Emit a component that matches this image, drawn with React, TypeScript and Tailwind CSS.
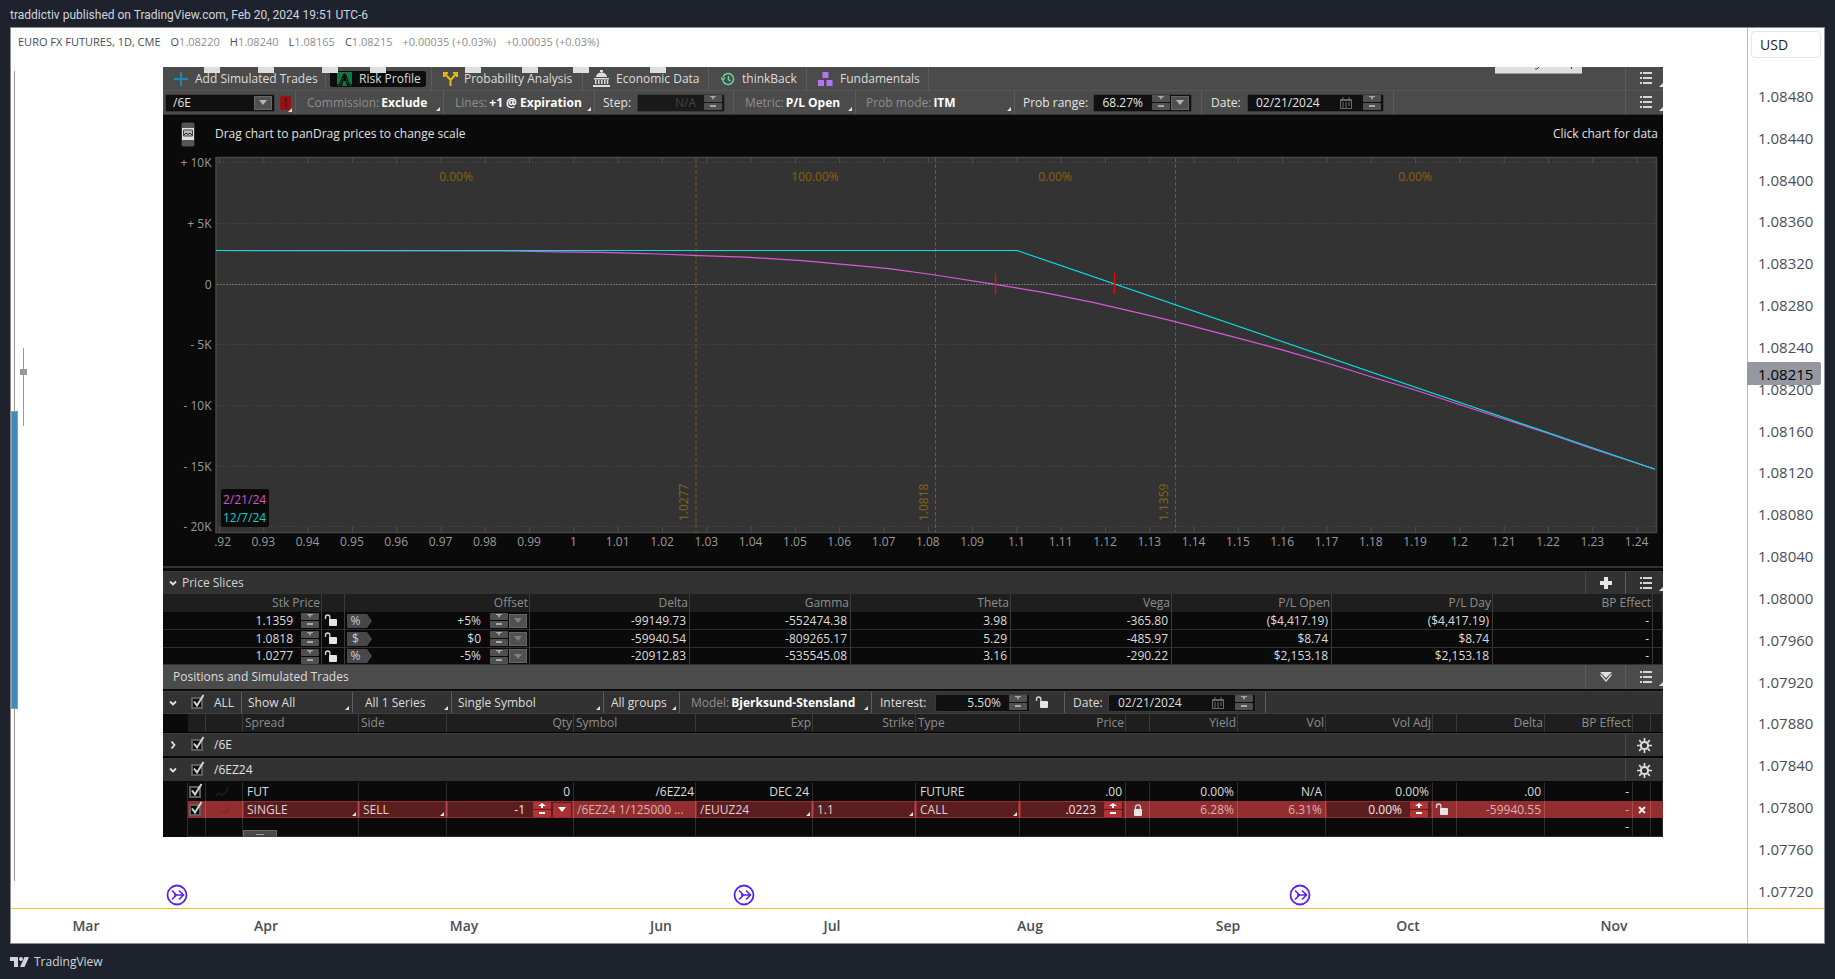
import type { ReactNode } from 'react';
import clsx from 'clsx';

const priceLabels = Array.from({ length: 20 }, (_, i) => (1.0848 - i * 0.0004).toFixed(5));
const months = ['Mar', 'Apr', 'May', 'Jun', 'Jul', 'Aug', 'Sep', 'Oct', 'Nov'];

const legend = [
  ['O', '1.08220'],
  ['H', '1.08240'],
  ['L', '1.08165'],
  ['C', '1.08215'],
];

const slices = [
  { price: '1.1359', unit: '%', offset: '+5%', cells: ['-99149.73', '-552474.38', '3.98', '-365.80', '($4,417.19)', '($4,417.19)', '-'] },
  { price: '1.0818', unit: '$', offset: '$0', cells: ['-59940.54', '-809265.17', '5.29', '-485.97', '$8.74', '$8.74', '-'] },
  { price: '1.0277', unit: '%', offset: '-5%', cells: ['-20912.83', '-535545.08', '3.16', '-290.22', '$2,153.18', '$2,153.18', '-'] },
];

/* ---------- icons ---------- */

function ListIcon() {
  return (
    <svg width="12" height="12" viewBox="0 0 12 12" fill="#d6d6d6" aria-hidden="true">
      <path d="M0 0h2v2H0zM3 0h9v2H3zM0 5h2v2H0zM3 5h9v2H3zM0 10h2v2H0zM3 10h9v2H3z" />
    </svg>
  );
}

function Corner() {
  return (
    <svg className="pointer-events-none absolute right-[3px] bottom-[3px]" width="4" height="4" viewBox="0 0 4 4" aria-hidden="true">
      <path d="M4 0v4H0z" fill="#e2e2e2" />
    </svg>
  );
}

function UnlockIcon() {
  return (
    <svg width="14" height="13" viewBox="0 0 14 13" aria-hidden="true">
      <path d="M1.5 5V3.2a2.2 2.2 0 0 1 4.4 0V6" fill="none" stroke="#d8d8d8" strokeWidth="1.3" />
      <rect x="5" y="5" width="8" height="7" rx="1" fill="#e4e4e4" />
    </svg>
  );
}

function LockIcon() {
  return (
    <svg width="10" height="12" viewBox="0 0 10 12" aria-hidden="true">
      <path d="M2.5 5V3.3a2.5 2.5 0 0 1 5 0V5" fill="none" stroke="#d8d8d8" strokeWidth="1.3" />
      <rect x="1" y="5" width="8" height="7" rx="1" fill="#e4e4e4" />
    </svg>
  );
}

function CalendarIcon() {
  return (
    <svg width="14" height="12" viewBox="0 0 14 12" fill="none" stroke="#6b6b6b" aria-hidden="true">
      <path d="M1.5 2.5h11v9h-11zM1.5 3.5h11M4 0v3M10 0v3" />
      <path d="M3 6h8M3 8h8M3 10h6" strokeDasharray="2 1" />
    </svg>
  );
}

function GearIcon() {
  return (
    <svg width="15" height="15" viewBox="0 0 15 15" fill="none" stroke="#e0e0e0" aria-hidden="true">
      <circle cx="7.5" cy="7.5" r="3.6" strokeWidth="2" />
      <path d="M7.5 0v3M7.5 12v3M0 7.5h3M12 7.5h3M2.2 2.2l2.1 2.1M10.7 10.7l2.1 2.1M12.8 2.2l-2.1 2.1M4.3 10.7l-2.1 2.1" strokeWidth="1.7" />
    </svg>
  );
}

function Chevron({ open }: { open: boolean }) {
  return (
    <svg width="8" height="8" viewBox="0 0 8 8" fill="none" stroke="#e0e0e0" strokeWidth="1.8" aria-hidden="true">
      <path d={open ? 'M1 2.5L4 5.5L7 2.5' : 'M2.5 0.5L5.5 4L2.5 7.5'} />
    </svg>
  );
}

/* ---------- controls ---------- */

function Stepper({ red }: { red?: boolean }) {
  const key = clsx('flex h-[7px] w-[18px] items-center justify-center rounded-[1px]', red ? 'bg-[#b23336]' : 'bg-[#505050]');
  const fill = red ? '#ffffff' : '#a8a8a8';
  return (
    <span className="flex shrink-0 flex-col gap-px">
      <button type="button" aria-label="Increase" className={key}>
        <svg width="8" height="5" viewBox="0 0 8 5">
          {red ? <path d="M0 3L4 0L8 3H5v2H3V3z" fill={fill} /> : <path d="M1 0h6v1H5.5L4 4L2.500 1H1z" fill={fill} />}
        </svg>
      </button>
      <button type="button" aria-label="Decrease" className={key}>
        <svg width="8" height="3" viewBox="0 0 8 3">
          <path d="M1 0h6v2H1z" fill={fill} />
        </svg>
      </button>
    </span>
  );
}

function DropButton({ red, dim }: { red?: boolean; dim?: boolean }) {
  return (
    <button
      type="button"
      aria-label="Open list"
      className={clsx('flex h-[14px] w-[18px] shrink-0 items-center justify-center', red ? 'bg-[#a83033]' : 'border border-[#666] bg-[#505050]')}
    >
      <svg width="8" height="5" viewBox="0 0 8 5">
        <path d="M0 0h8L4 5z" fill={red ? '#fff' : dim ? '#808080' : '#b5b5b5'} />
      </svg>
    </button>
  );
}

function CheckBox({ label }: { label: string }) {
  return (
    <span className="relative block h-3 w-3 shrink-0">
      <input type="checkbox" defaultChecked aria-label={label} className="block h-3 w-3 appearance-none border-2 border-[#5f5f5f] bg-[#0c0c0c]" />
      <svg className="pointer-events-none absolute -top-[3px] left-0" width="15" height="15" viewBox="0 0 15 15" fill="none" stroke="#d4d4d4" strokeWidth="2" aria-hidden="true">
        <path d="M3 7.500L6 11.500L12.500 1" />
      </svg>
    </span>
  );
}

function Seg({ className, corner, children }: { className?: string; corner?: boolean; children?: ReactNode }) {
  return (
    <div className={clsx('relative flex h-full items-center border-r border-[#5c5c5c] whitespace-nowrap', className)}>
      {children}
      {corner && <Corner />}
    </div>
  );
}

function Pick({ id, label, value, strong, className }: { id: string; label?: string; value: string; strong?: boolean; className?: string }) {
  return (
    <>
      {label && (
        <label htmlFor={id} className="mr-[2px] text-[#8e8e8e]">
          {label}
        </label>
      )}
      <select
        id={id}
        aria-label={label ? undefined : value}
        className={clsx('h-4 min-w-0 flex-1 appearance-none bg-transparent leading-4 outline-none', strong ? 'font-bold text-white' : 'text-[#dedede]', className)}
      >
        <option>{value}</option>
      </select>
    </>
  );
}

const box = 'flex h-[18px] items-center rounded-[2px] border border-[#3a3a3a] px-[2px]';

/* ---------- tabs ---------- */

function Tabs() {
  const marks = [41, 95, 159, 207, 302, 359, 410, 487];
  return (
    <nav className="relative flex h-6 items-center border-b border-[#565656] bg-[#4b4b4b] text-[#dcdcdc]">
      <Seg className="w-[163px]">
        <button type="button" className="ml-[11px] flex items-center gap-[7px]">
          <svg width="14" height="14" viewBox="0 0 14 14" stroke="#1d86b8" strokeWidth="2" aria-hidden="true">
            <path d="M7 0v14M0 7h14" />
          </svg>
          Add Simulated Trades
        </button>
      </Seg>
      <Seg className="w-[106px]">
        <button type="button" className="ml-1 flex h-4 items-center gap-[7px] rounded-[3px] bg-[#0c0c0c] pr-[5px] pl-[7px]">
          <svg width="15" height="14" viewBox="0 0 15 14" aria-hidden="true">
            <path d="M0 0h15v14H0z" fill="#0d7a43" />
            <path d="M2 14L4.500 11C6 9 6 2 7.500 2S9 9 10.500 11L13 14h-3L8.500 9H6.500L5 14z" fill="#0c0c0c" />
            <path d="M0 13.500L2.500 12C5 10 5 2 7.500 2S10 10 12.500 12L15 13.500" fill="none" stroke="#0c0c0c" strokeWidth="1.2" />
          </svg>
          Risk Profile
        </button>
      </Seg>
      <Seg className="w-[151px]">
        <button type="button" className="ml-[11px] flex items-center gap-[6px]">
          <svg width="15" height="14" viewBox="0 0 15 14" fill="none" stroke="#e8b90c" strokeWidth="2" aria-hidden="true">
            <path d="M7.500 14V8L2 2M7.500 8L13 2M1 5V1h4M10 1h4v4" />
          </svg>
          Probability Analysis
        </button>
      </Seg>
      <Seg className="w-[126px]">
        <button type="button" className="ml-[10px] flex items-center gap-[6px]">
          <svg width="17" height="17" viewBox="0 0 17 17" fill="#dcdcdc" aria-hidden="true">
            <path d="M7 0h3v2H7zM8 1h1v3H8zM3 7a5.500 4.500 0 0 1 11 0zM1 8h15v1.500H1zM2 10h1.500v4H2zM5 10h1.500v4H5zM8 10h1.500v4H8zM11 10h1.500v4H11zM13.800 10h1.500v4h-1.500zM0 15h17v2H0z" />
          </svg>
          Economic Data
        </button>
      </Seg>
      <Seg className="w-[98px]">
        <button type="button" className="ml-3 flex items-center gap-[7px]">
          <svg width="14" height="14" viewBox="0 0 14 14" fill="none" stroke="#66d2a0" strokeWidth="1.5" aria-hidden="true">
            <path d="M2 9A5.500 5.500 0 1 0 2 5M0 5.500L1.800 8L4 5.500M7.500 4v3.500L9.500 9" />
          </svg>
          thinkBack
        </button>
      </Seg>
      <Seg className="w-[122px]">
        <button type="button" className="ml-[11px] flex items-center gap-[7px]">
          <svg width="15" height="14" viewBox="0 0 15 14" fill="#b274f6" aria-hidden="true">
            <path d="M4.500 0h6v6h-6zM0 8h6v6H0zM8.500 8h6v6h-6z" />
          </svg>
          Fundamentals
        </button>
      </Seg>
      <MenuCell />
      {marks.map((x) => (
        <span key={x} className="absolute top-0 h-[6px] w-4 bg-[#dedede]" style={{ left: x }} />
      ))}
      <span className="absolute top-0 right-[81px] h-[7px] w-[87px] border-b border-[#999] bg-[#dedede]">
        <svg className="block" width="87" height="3" viewBox="0 0 87 3" fill="none" stroke="#444" aria-hidden="true">
          <path d="M44 0L42 2H40M76.500 0v2" />
        </svg>
      </span>
    </nav>
  );
}

function MenuCell({ children }: { children?: ReactNode }) {
  return (
    <div className="relative ml-auto flex h-full">
      {children}
      <div className="relative flex h-full w-[38px] items-center justify-center border-l border-[#5c5c5c] pr-[6px] pb-px pl-2">
        <button type="button" aria-label="Menu">
          <ListIcon />
        </button>
        <svg className="absolute right-0 bottom-[3px]" width="4" height="4" viewBox="0 0 4 4" aria-hidden="true">
          <path d="M4 0v4H0z" fill="#e2e2e2" />
        </svg>
      </div>
    </div>
  );
}

function RiskToolbar() {
  return (
    <div className="flex h-6 items-center border-b border-[#333] bg-[#4b4b4b] text-[#e4e4e4]">
      <Seg className="w-[133px]">
        <div className={clsx(box, 'ml-[2px] w-[110px] bg-[#101010]')}>
          <input aria-label="Symbol" defaultValue="/6E" className="min-w-0 flex-1 bg-transparent pl-[5px] outline-none" />
          <DropButton />
        </div>
        <span className="relative ml-[5px] flex h-[14px] w-[11px] items-center justify-center rounded-[2px] bg-[#961014] text-[#4a0a0c]">1</span>
        <svg className="absolute right-[3px] bottom-[2px]" width="4" height="4" viewBox="0 0 4 4" aria-hidden="true">
          <path d="M4 0v4H0z" fill="#e2e2e2" />
        </svg>
      </Seg>
      <Seg className="w-[148px] pl-[11px]" corner>
        <Pick id="commission" label="Commission:" value="Exclude" strong />
      </Seg>
      <Seg className="w-[151px] pl-[11px]" corner>
        <Pick id="lines" label="Lines:" value="+1 @ Expiration" strong />
      </Seg>
      <Seg className="w-[139px] pl-2">
        <label htmlFor="step">Step:</label>
        <div className={clsx(box, 'ml-[6px] w-[88px] bg-[#191919]')}>
          <input id="step" defaultValue="N/A" disabled className="min-w-0 flex-1 bg-transparent pr-2 text-right text-[#444]" />
          <Stepper />
        </div>
      </Seg>
      <Seg className="w-[122px] pl-[11px]" corner>
        <Pick id="metric" label="Metric:" value="P/L Open" strong />
      </Seg>
      <Seg className="w-[159px] pl-[10px]" corner>
        <Pick id="probmode" label="Prob mode:" value="ITM" strong />
      </Seg>
      <Seg className="w-[187px] pl-2">
        <label htmlFor="probrange">Prob range:</label>
        <div className={clsx(box, 'ml-auto mr-[9px] w-[99px] gap-px bg-[#101010]')}>
          <input id="probrange" defaultValue="68.27%" className="min-w-0 flex-1 bg-transparent pr-2 text-right outline-none" />
          <Stepper />
          <DropButton />
        </div>
      </Seg>
      <Seg className="w-[192px] pl-[9px]">
        <label htmlFor="date1">Date:</label>
        <div className={clsx(box, 'ml-auto mr-[9px] w-[137px] bg-[#101010]')}>
          <input id="date1" defaultValue="02/21/2024" className="min-w-0 flex-1 bg-transparent pl-[6px] outline-none" />
          <span className="mr-[10px]">
            <CalendarIcon />
          </span>
          <Stepper />
        </div>
      </Seg>
      <MenuCell />
    </div>
  );
}

/* ---------- chart ---------- */

const yTicks = [
  { y: 48, label: '+ 10K' },
  { y: 109, label: '+ 5K' },
  { y: 170, label: '0' },
  { y: 230, label: '- 5K' },
  { y: 291, label: '- 10K' },
  { y: 352, label: '- 15K' },
  { y: 412, label: '- 20K' },
];

const todayCurve =
  '53,135.5 337,135.9 395,136.8 438,137.4 457,137.8 496,139 536,140.7 583,142.2 639,145.7 694,150.7 726,153.7 772,160 832,169.3 880,177.3 931,187.7 983,199.7 1012,206.7 1077,223.7 1121,235.3 1164,248 1208,261.7 1252,275 1297,289.7 1341,304 1386,318.7 1430,334 1474,348.3 1492,354.3';

const bands = [
  { x: 533, label: '1.0277' },
  { x: 772.5, label: '1.0818' },
  { x: 1012.5, label: '1.1359' },
];

const odds = [
  { x: 293, label: '0.00%' },
  { x: 652, label: '100.00%' },
  { x: 892, label: '0.00%' },
  { x: 1252, label: '0.00%' },
];

function RiskChart() {
  const ticks = Array.from({ length: 33 }, (_, i) => ({ x: 56.5 + i * 44.3, label: i === 0 ? '.92' : String(Number((0.92 + i * 0.01).toFixed(2))) }));
  return (
    <div className="relative bg-[#0a0a0a] text-[#e0e0e0]">
      <div className="absolute inset-x-0 top-0 flex h-[38px] items-center pr-[5px] pl-[18px]">
        <button type="button" aria-label="Chart snapshot" className="flex h-[25px] w-[14px] items-center justify-center rounded-[2px] border border-[#2a2a2a] bg-[#555]">
          <svg width="12" height="12" viewBox="0 0 12 12" aria-hidden="true">
            <path d="M0 0h12v12H0z" fill="#e2e2e2" />
            <path d="M1.500 2h9v6h-9z" fill="#bbb" stroke="#444" />
            <path d="M2 7l2-2 2 1.500L8 5l2 2" fill="none" stroke="#222" />
          </svg>
        </button>
        <span className="ml-5">Drag chart to panDrag prices to change scale</span>
        <span className="ml-auto">Click chart for data</span>
      </div>
      <svg className="block h-auto w-full" viewBox="0 0 1500 451" fontSize="12" fill="#9a9a9a" role="img" aria-label="Risk profile">
        <rect x="53" y="42.500" width="1440.500" height="375" fill="#333" stroke="#484848" strokeWidth="1.500" />
        {yTicks.map((t) => (
          <g key={t.label}>
            <path d={`M54 ${t.y - 0.5}H1493`} stroke={t.label === '0' ? '#757575' : '#4a4a4a'} strokeDasharray={t.label === '0' ? '2 1' : '1 2'} />
            <text x="48.500" y={t.y + 4} textAnchor="end">
              {t.label}
            </text>
          </g>
        ))}
        {ticks.map((t, i) => (
          <g key={t.label}>
            <path d={`M${t.x} 43v5M${t.x} 412v5`} stroke="#505050" />
            <text x={i === 0 ? 68 : t.x - 0.5} y="431" textAnchor={i === 0 ? 'end' : 'middle'}>
              {t.label}
            </text>
          </g>
        ))}
        <g fill="#8a6409">
          {bands.map((b) => (
            <g key={b.label}>
              <path d={`M${b.x} 43V417`} stroke="#7a5a10" strokeDasharray="4 2" />
              <text transform={`translate(${b.x - 8} 406) rotate(-90)`}>{b.label}</text>
            </g>
          ))}
          {odds.map((o) => (
            <text key={o.x} x={o.x} y="66" textAnchor="middle">
              {o.label}
            </text>
          ))}
        </g>
        <polyline points={todayCurve} fill="none" stroke="#d958d9" strokeWidth="1.200" />
        <path d="M53 135.500H854L1492 354.300" fill="none" stroke="#08dede" strokeWidth="1.200" />
        <path d="M832.500 158v21M951.500 158v21" stroke="#e01010" strokeWidth="1.300" />
        <rect x="58" y="374" width="48" height="38" rx="2" fill="#0a0a0a" />
        <text x="60" y="389" fill="#d052d0">
          2/21/24
        </text>
        <text x="60" y="407" fill="#0fd0d0">
          12/7/24
        </text>
      </svg>
      <div className="h-[5px] border-t-2 border-[#333]" />
    </div>
  );
}

/* ---------- price slices ---------- */

function PriceSlices() {
  const heads = ['Delta', 'Gamma', 'Theta', 'Vega', 'P/L Open', 'P/L Day', 'BP Effect'];
  return (
    <section>
      <div className="flex h-[23px] items-center border-t border-[#3c3c3c] bg-[#323232] pl-[6px] text-[#d4d4d4]">
        <Chevron open />
        <h2 className="ml-[5px]">Price Slices</h2>
        <MenuCell>
          <div className="flex h-full w-[40px] items-center justify-center border-l border-[#4a4a4a]">
            <button type="button" aria-label="Add slice">
              <svg width="12" height="12" viewBox="0 0 12 12" stroke="#e6e6e6" strokeWidth="4">
                <path d="M6 0v12M0 6h12" />
              </svg>
            </button>
          </div>
        </MenuCell>
      </div>
      <table className="w-full table-fixed border-separate border-spacing-0 text-right leading-4 text-[#dcdcdc]">
        <colgroup>
          <col className="w-[159px]" />
          <col className="w-[23px]" />
          <col className="w-[185px]" />
          <col className="w-[160px]" />
          <col className="w-[161px]" />
          <col className="w-[160px]" />
          <col className="w-[161px]" />
          <col className="w-[160px]" />
          <col className="w-[161px]" />
          <col className="w-[160px]" />
          <col className="w-[10px]" />
        </colgroup>
        <thead className="bg-[#1e1e1e] text-[#8e8e8e]">
          <tr>
            {['Stk Price', '', 'Offset', ...heads, ''].map((h, i) => (
              <th key={i} className="h-[18px] border-r border-[#3a3a3a] p-0 pr-px font-normal">
                {h}
              </th>
            ))}
          </tr>
        </thead>
        <tbody className="bg-[#0a0a0a]">
          {slices.map((s, row) => {
            const cell = clsx('border-r border-b border-r-[#3a3a3a] border-b-[#303030] p-0', row === 2 ? 'h-[17px]' : 'h-[18px]');
            return (
              <tr key={s.price}>
                <td className={cell}>
                  <div className="flex h-4 items-center justify-end gap-2 pr-[2px]">
                    {s.price}
                    <Stepper />
                  </div>
                </td>
                <td className={cell}>
                  <button type="button" aria-label="Unlock price" className="ml-[2px] block">
                    <UnlockIcon />
                  </button>
                </td>
                <td className={cell}>
                  <div className="flex h-4 items-center justify-end gap-px pr-[2px] pl-[2px]">
                    <button type="button" className="relative mr-auto block h-[14px] w-[25px] pr-2 text-center leading-[14px] text-[#c8c8c8]">
                      <svg className="absolute inset-0" width="25" height="14" viewBox="0 0 25 14" aria-hidden="true">
                        <path d="M0 0h20l5 7-5 7H0z" fill="#484848" />
                      </svg>
                      <span className="relative">{s.unit}</span>
                    </button>
                    <span className="mr-2">{s.offset}</span>
                    <Stepper />
                    <DropButton dim />
                  </div>
                </td>
                {s.cells.map((c, i) => (
                  <td key={i} className={clsx(cell, 'pr-[3px]')}>
                    {c}
                  </td>
                ))}
                <td className={cell} />
              </tr>
            );
          })}
        </tbody>
      </table>
    </section>
  );
}

/* ---------- positions ---------- */

function RedField({ id, value }: { id: string; value: string }) {
  return (
    <div className="relative m-px flex h-[15px] items-center bg-[#5c1d1f] pl-[3px]">
      <select aria-label={id} className="h-[15px] w-full appearance-none bg-transparent leading-[15px] text-[#e2d2d2] outline-none">
        <option>{value}</option>
      </select>
      <svg className="pointer-events-none absolute right-px bottom-px" width="4" height="4" viewBox="0 0 4 4" aria-hidden="true">
        <path d="M4 0v4H0z" fill="#e2e2e2" />
      </svg>
    </div>
  );
}

function Squiggle({ stroke }: { stroke: string }) {
  return (
    <svg className="mx-auto" width="13" height="10" viewBox="0 0 13 10" fill="none" stroke={stroke} aria-hidden="true">
      <path d="M0 9L3 6L5 8L10 6L12 0" />
    </svg>
  );
}

function GroupRow({ name, open }: { name: string; open: boolean }) {
  return (
    <tr>
      <td colSpan={20} className="h-[25px] border-t border-t-black p-0 align-top">
        <div className="flex h-[23px] items-center border-t border-[#3e3e3e] bg-[#323232] pl-[6px] text-[#e0e0e0]">
          <button type="button" aria-label="Toggle group">
            <Chevron open={open} />
          </button>
          <span className="mr-[11px] ml-[14px]">
            <CheckBox label={name} />
          </span>
          {name}
          <div className="ml-auto flex h-full w-[38px] items-center justify-center border-l border-[#4a4a4a]">
            <button type="button" aria-label="Group settings">
              <GearIcon />
            </button>
          </div>
        </div>
      </td>
    </tr>
  );
}

const cols = [
  { w: 'w-[25px]', h: '' },
  { w: 'w-[18px]', h: '' },
  { w: 'w-[37px]', h: '' },
  { w: 'w-[116px]', h: 'Spread', left: true },
  { w: 'w-[88px]', h: 'Side', left: true },
  { w: 'w-[127px]', h: 'Qty' },
  { w: 'w-[122px]', h: 'Symbol', left: true },
  { w: 'w-[117px]', h: 'Exp' },
  { w: 'w-[103px]', h: 'Strike' },
  { w: 'w-[104px]', h: 'Type', left: true },
  { w: 'w-[106px]', h: 'Price' },
  { w: 'w-[24px]', h: '' },
  { w: 'w-[88px]', h: 'Yield' },
  { w: 'w-[88px]', h: 'Vol' },
  { w: 'w-[107px]', h: 'Vol Adj' },
  { w: 'w-[24px]', h: '' },
  { w: 'w-[88px]', h: 'Delta' },
  { w: 'w-[88px]', h: 'BP Effect' },
  { w: 'w-[18px]', h: '' },
  { w: 'w-[12px]', h: '' },
];

function Positions() {
  const black = 'h-[19px] border-r border-[#2c2c2c] p-0 pr-[3px]';
  const red = 'h-[17px] border-r border-[#b04a4d] bg-[#922d30] p-0';
  return (
    <section>
      <div className="flex h-[26px] items-center border-b-2 border-[#0a0a0a] bg-[#4b4b4b] pl-[10px] text-[#dedede]">
        <h2>Positions and Simulated Trades</h2>
        <MenuCell>
          <div className="flex h-full w-[40px] items-center justify-center border-l border-[#5c5c5c]">
            <button type="button" aria-label="Collapse">
              <svg width="12" height="10" viewBox="0 0 12 10">
                <path d="M0 0h12L6 6z" fill="#e0e0e0" />
                <path d="M0.500 2.500L6 9L11.500 2.500" fill="none" stroke="#e0e0e0" strokeWidth="1.200" />
              </svg>
            </button>
          </div>
        </MenuCell>
      </div>
      <div className="flex h-[23px] items-center border-y border-[#3e3e3e] bg-[#323232] text-[#dedede]">
        <Seg className="w-[79px] border-[#4a4a4a] pl-[6px]">
          <Chevron open />
          <span className="mr-[11px] ml-[14px]">
            <CheckBox label="All positions" />
          </span>
          ALL
        </Seg>
        <Seg className="w-[111px] border-[#4a4a4a] pl-[6px]" corner>
          <Pick id="show" value="Show All" />
        </Seg>
        <Seg className="w-[99px] border-[#4a4a4a] pl-3" corner>
          <Pick id="series" value="All 1 Series" />
        </Seg>
        <Seg className="w-[152px] border-[#4a4a4a] pl-[6px]" corner>
          <Pick id="symbols" value="Single Symbol" />
        </Seg>
        <Seg className="w-[76px] border-[#4a4a4a] pl-[7px]" corner>
          <Pick id="groups" value="All groups" />
        </Seg>
        <Seg className="w-[192px] border-[#4a4a4a] pl-[11px]" corner>
          <Pick id="model" label="Model:" value="Bjerksund-Stensland" strong />
        </Seg>
        <Seg className="w-[193px] border-[#4a4a4a] pl-2">
          <label htmlFor="interest">Interest:</label>
          <div className={clsx(box, 'ml-auto w-[95px] bg-[#101010]')}>
            <input id="interest" defaultValue="5.50%" className="min-w-0 flex-1 bg-transparent pr-2 text-right outline-none" />
            <Stepper />
          </div>
          <button type="button" aria-label="Unlock interest" className="mr-[15px] ml-[5px]">
            <UnlockIcon />
          </button>
        </Seg>
        <Seg className="w-[201px] border-[#4a4a4a] pl-2">
          <label htmlFor="date2">Date:</label>
          <div className={clsx(box, 'ml-auto mr-[9px] w-[148px] bg-[#101010]')}>
            <input id="date2" defaultValue="02/21/2024" className="min-w-0 flex-1 bg-transparent pl-[7px] outline-none" />
            <span className="mr-[10px]">
              <CalendarIcon />
            </span>
            <Stepper />
          </div>
        </Seg>
      </div>
      <table className="w-full table-fixed border-separate border-spacing-0 overflow-hidden bg-[#0a0a0a] text-right leading-4 whitespace-nowrap text-[#dcdcdc]">
        <colgroup>
          {cols.map((c, i) => (
            <col key={i} className={c.w} />
          ))}
        </colgroup>
        <thead className="text-[#8e8e8e]">
          <tr>
            {cols.map((c, i) => (
              <th key={i} className={clsx('h-[18px] p-0 font-normal', i > 0 && 'border-r border-[#3a3a3a] bg-[#1e1e1e]', c.left ? 'pl-[2px] text-left' : 'pr-px')}>
                {c.h}
              </th>
            ))}
          </tr>
        </thead>
        <tbody>
          <GroupRow name="/6E" open={false} />
          <GroupRow name="/6EZ24" open />
          <tr>
            <td className={black} />
            <td className="border-r border-[#2c2c2c] p-0 pl-px">
              <CheckBox label="FUT" />
            </td>
            <td className={black}>
              <Squiggle stroke="#2b2b2b" />
            </td>
            <td className={clsx(black, 'pl-1 text-left')}>FUT</td>
            <td className={black} />
            <td className={black}>0</td>
            <td className="h-[19px] border-r border-[#2c2c2c] p-0 pr-px">/6EZ24</td>
            <td className={black}>DEC 24</td>
            <td className={black} />
            <td className={clsx(black, 'pl-1 text-left')}>FUTURE</td>
            <td className={black}>.00</td>
            <td className={black} />
            <td className={black}>0.00%</td>
            <td className={black}>N/A</td>
            <td className={black}>0.00%</td>
            <td className={black} />
            <td className={black}>.00</td>
            <td className={black}>-</td>
            <td className={black} />
            <td className={black} />
          </tr>
          <tr className="text-[#d9b0b0]">
            <td className="h-[17px] border-r border-[#2c2c2c] p-0" />
            <td className={clsx(red, 'pl-px')}>
              <CheckBox label="SINGLE" />
            </td>
            <td className={red}>
              <Squiggle stroke="#7a2629" />
            </td>
            <td className={red}>
              <RedField id="Spread" value="SINGLE" />
            </td>
            <td className={red}>
              <RedField id="Side" value="SELL" />
            </td>
            <td className={red}>
              <div className="m-px flex h-[15px] items-center gap-[2px] bg-[#5c1d1f] pr-px">
                <input aria-label="Quantity" defaultValue="-1" className="min-w-0 flex-1 bg-transparent pr-[6px] text-right text-[#f0e4e4] outline-none" />
                <Stepper red />
                <DropButton red />
              </div>
            </td>
            <td className={clsx(red, 'pl-[3px] text-left')}>/6EZ24 1/125000 ...</td>
            <td className={red}>
              <RedField id="Expiration" value="/EUUZ24" />
            </td>
            <td className={red}>
              <RedField id="Strike" value="1.1" />
            </td>
            <td className={red}>
              <RedField id="Type" value="CALL" />
            </td>
            <td className={red}>
              <div className="m-px flex h-[15px] items-center bg-[#5c1d1f] pr-[2px]">
                <input aria-label="Price" defaultValue=".0223" className="min-w-0 flex-1 bg-transparent pr-2 text-right text-[#f0e4e4] outline-none" />
                <Stepper red />
              </div>
            </td>
            <td className={red}>
              <button type="button" aria-label="Lock price" className="mx-auto block">
                <LockIcon />
              </button>
            </td>
            <td className={clsx(red, 'pr-[3px]')}>6.28%</td>
            <td className={clsx(red, 'pr-[3px]')}>6.31%</td>
            <td className={red}>
              <div className="m-px flex h-[15px] items-center bg-[#5c1d1f] pr-[3px]">
                <input aria-label="Vol adjustment" defaultValue="0.00%" className="min-w-0 flex-1 bg-transparent pr-2 text-right text-[#f0e4e4] outline-none" />
                <Stepper red />
              </div>
            </td>
            <td className={red}>
              <button type="button" aria-label="Unlock vol" className="ml-[2px] block">
                <UnlockIcon />
              </button>
            </td>
            <td className={clsx(red, 'pr-[3px]')}>-59940.55</td>
            <td className={clsx(red, 'pr-[3px]')}>-</td>
            <td className={red}>
              <button type="button" aria-label="Remove" className="mx-auto block">
                <svg width="8" height="8" viewBox="0 0 8 8" stroke="#eee" strokeWidth="2">
                  <path d="M1 1l6 6M7 1L1 7" />
                </svg>
              </button>
            </td>
            <td className="bg-[#922d30] p-0" />
          </tr>
          <tr>
            {cols.map((c, i) => (
              <td key={i} className={clsx('h-[19px] border-r border-[#2c2c2c] p-0', i > 0 && 'border-b', i === 17 && 'pr-[3px]')}>
                {i === 17 ? '-' : null}
                {i === 3 && (
                  <div className="relative">
                    <span className="absolute top-[3px] left-0 flex h-2 w-[34px] items-center justify-center border border-[#666] bg-[#484848]">
                      <span className="h-px w-2 bg-[#999]" />
                    </span>
                  </div>
                )}
              </td>
            ))}
          </tr>
        </tbody>
      </table>
    </section>
  );
}

/* ---------- page ---------- */

function Candles() {
  return (
    <svg className="block overflow-visible" width="152" height="770" viewBox="0 0 152 770" aria-hidden="true">
      <path d="M3.500 4V814M12.500 281V359" stroke="#989898" />
      <rect x="0.500" y="344.500" width="6" height="297" fill="#3f8abb" stroke="#989898" />
      <rect x="9" y="302" width="7" height="6" fill="#989898" />
    </svg>
  );
}

function RollMarker() {
  return (
    <button type="button" aria-label="Contract switch" className="mx-auto block">
      <svg width="22" height="22" viewBox="0 0 22 22" fill="none" stroke="#5b21f0" strokeWidth="1.800">
        <circle cx="11" cy="11" r="9.500" />
        <path d="M6 6.500L10.500 11L6 15.500M8 11h9.500M13 6.500L17.500 11L13 15.500" strokeWidth="1.600" />
      </svg>
    </button>
  );
}

export default function App() {
  return (
    <div className="flex min-h-screen flex-col bg-[#1e222d] px-[10px] font-['Open_Sans','Noto_Sans',sans-serif] text-xs">
      <header className="flex h-[27px] items-center pt-[3px] font-[Roboto,sans-serif] text-xs text-[#d1d4dc]">traddictiv published on TradingView.com, Feb 20, 2024 19:51 UTC-6</header>

      <main className="grid flex-1 grid-cols-[minmax(0,1fr)_77px] grid-rows-[1fr_35px] border border-[#8b8d94] bg-white">
        <div className="flex flex-col">
          <div className="flex h-[39px] gap-[10px] pt-[6px] pl-[7px] text-[11px] leading-4 text-[#8e8e8e]">
            <span className="text-[#4a4d57]">EURO FX FUTURES, 1D, CME</span>
            {legend.map(([k, v]) => (
              <span key={k}>
                <span className="text-[#4a4d57]">{k}</span>
                {v}
              </span>
            ))}
            <span>+0.00035 (+0.03%)</span>
            <span>+0.00035 (+0.03%)</span>
          </div>
          <div className="grid grid-cols-[152px_minmax(0,1fr)_84px]">
            <Candles />
            <div className="overflow-hidden bg-[#0a0a0a]">
              <Tabs />
              <RiskToolbar />
              <RiskChart />
              <PriceSlices />
              <Positions />
            </div>
          </div>
          <div className="grid flex-1 grid-cols-[332fr_801fr_312fr_291fr] items-start pt-[47px]">
            <RollMarker />
            <RollMarker />
            <RollMarker />
          </div>
        </div>

        <aside className="relative flex flex-col border-l border-[#f6bd27] text-[15px] text-[#4a4d57]">
          <button type="button" className="mt-[3px] ml-[3px] h-[27px] w-[70px] rounded-[4px] border border-[#e4e6ee] pl-2 text-left text-sm text-[#1c1f29]">
            USD
          </button>
          <div className="flex flex-1 flex-col justify-between pt-[30px] pb-[9px] pl-[10px] leading-4">
            {priceLabels.map((p) => (
              <span key={p}>{p}</span>
            ))}
          </div>
          <span className="absolute top-[334px] -left-px flex h-[23px] w-[74px] items-center rounded-r-[2px] bg-[#9598a1] pl-[11px] text-black">1.08215</span>
        </aside>

        <div className="grid grid-cols-[150fr_210fr_186fr_208fr_134fr_262fr_134fr_226fr_186fr_40fr] items-center border-t border-[#f6bd27] text-center text-sm font-semibold text-[#4a4d57]">
          {months.map((m) => (
            <span key={m}>{m}</span>
          ))}
        </div>
        <div className="border-t border-l border-[#f6bd27]" />
      </main>

      <footer className="flex h-[35px] items-center gap-[5px] text-xs text-[#d1d4dc]">
        <svg width="19" height="10" viewBox="0 0 19 10" fill="#d1d4dc" aria-hidden="true">
          <path d="M0 0h8v10H4V4H0zM14.500 0H19l-4.500 10H10z" />
          <circle cx="11" cy="2" r="2" />
        </svg>
        TradingView
      </footer>
    </div>
  );
}
